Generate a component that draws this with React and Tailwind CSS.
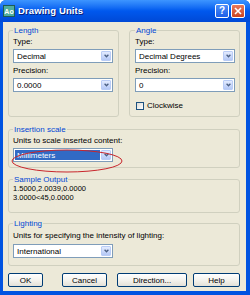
import React from 'react';

const Chevron = () => (
  <svg width="5" height="4" viewBox="0 0 5 4">
    <path d="M0.6 0.7 L2.5 2.7 L4.4 0.7" fill="none" stroke="#4D6185" strokeWidth="1.3" />
  </svg>
);

const Select = ({ value, highlighted }) => (
  <div className="w-[100px] h-[14px] bg-white border border-[#7F9DB9] flex items-stretch p-[1px]">
    {highlighted ? (
      <div className="flex-1 flex items-center pl-[2px] text-[8px] leading-[9px] bg-[#316AC5] text-white">{value}</div>
    ) : (
      <div className="flex-1 flex items-center pl-[2px] text-[8px] leading-[9px] text-black">{value}</div>
    )}
    <div className="w-[10px] ml-[1px] rounded-[1px] bg-linear-to-b from-[#E3EBFE] to-[#B4C8F6] border border-[#B9CCF6] flex items-center justify-center">
      <Chevron />
    </div>
  </div>
);

const Label = ({ children, className = '' }) => (
  <div className={`text-[8px] leading-[9px] text-black whitespace-nowrap ${className}`}>{children}</div>
);

const Legend = ({ children }) => (
  <legend className="px-[1px] text-[8px] leading-[9px] text-[#0046D5]">{children}</legend>
);

const Button = ({ children, className = '' }) => (
  <div className={`h-[14px] border border-[#003C74] rounded-[2px] bg-linear-to-b from-white via-[#F4F3EE] to-[#E3E1D8] flex items-center justify-center text-[8px] leading-[9px] text-black ${className}`}>
    {children}
  </div>
);

export default function App() {
  return (
    <div className="w-[250px] h-[295px] bg-[#0053E1] rounded-t-[6px] overflow-hidden flex flex-col font-['Liberation_Sans',Arial,sans-serif]">
      {/* Title bar */}
      <div className="h-[22px] shrink-0 flex items-center pl-[3px] pr-[5px] bg-linear-to-b from-[#3D95FF] via-[#0058EE] to-[#0049D6]">
        <div className="w-[12px] h-[12px] bg-[#4FAE9E] border border-[#1E5B55] flex items-end justify-center text-[7px] leading-[8px] font-bold text-white">
          Ao
        </div>
        <div className="ml-[3px] text-[9.5px] leading-[12px] font-bold text-white tracking-[0.1px] [text-shadow:1px_1px_0_#0A1E7A]">
          Drawing Units
        </div>
        <div className="flex-1" />
        <div className="w-[14px] h-[14px] rounded-[2px] border border-white bg-linear-to-b from-[#4D8EF8] to-[#1E5EE8] flex items-center justify-center text-white text-[10px] leading-[10px] font-bold">
          ?
        </div>
        <div className="ml-[2px] w-[14px] h-[14px] rounded-[2px] border border-white bg-linear-to-b from-[#E9795B] to-[#C9421F] flex items-center justify-center">
          <svg width="8" height="8" viewBox="0 0 8 8">
            <path d="M1 1 L7 7 M7 1 L1 7" stroke="white" strokeWidth="1.6" />
          </svg>
        </div>
      </div>

      {/* Body */}
      <div className="flex-1 ml-[3px] mr-[4px] mb-[4px] bg-[#ECE9D8] pl-[5px] pr-[6px] pt-[4px] flex flex-col">
        <div className="grid grid-cols-2 gap-[10px]">
          <fieldset className="border border-[#D0D0BF] rounded-[3px] pl-[4px] pr-[5px] pb-[6px]">
            <Legend>Length</Legend>
            <Label className="mt-[2px]">Type:</Label>
            <div className="mt-[3px]"><Select value="Decimal" /></div>
            <Label className="mt-[3px]">Precision:</Label>
            <div className="mt-[3px]"><Select value="0.0000" /></div>
          </fieldset>
          <fieldset className="border border-[#D0D0BF] rounded-[3px] pl-[5px] pr-[4px] pb-[6px]">
            <Legend>Angle</Legend>
            <Label className="mt-[2px]">Type:</Label>
            <div className="mt-[3px]"><Select value="Decimal Degrees" /></div>
            <Label className="mt-[3px]">Precision:</Label>
            <div className="mt-[3px]"><Select value="0" /></div>
            <div className="mt-[9px] flex items-center">
              <div className="w-[8px] h-[8px] ml-[1px] border border-[#1C5180] bg-linear-to-br from-[#DCDCD7] to-white" />
              <Label className="ml-[3px]">Clockwise</Label>
            </div>
          </fieldset>
        </div>

        <fieldset className="relative mt-[8px] border border-[#D0D0BF] rounded-[3px] pl-[4px] pr-[5px] pb-[5px]">
          <Legend>Insertion scale</Legend>
          <Label className="mt-[2px]">Units to scale inserted content:</Label>
          <div className="mt-[3px]"><Select value="Millimeters" highlighted /></div>
          <svg className="absolute left-[2px] top-[15px]" width="112" height="24" viewBox="0 0 112 24">
            <ellipse cx="56" cy="12" rx="55" ry="11" fill="none" stroke="#C8262C" strokeWidth="1" />
          </svg>
        </fieldset>

        <fieldset className="mt-[7px] border border-[#D0D0BF] rounded-[3px] pl-[4px] pr-[5px] pb-[10px]">
          <Legend>Sample Output</Legend>
          <div className="text-[7.5px] leading-[9px] text-black">1.5000,2.0039,0.0000</div>
          <div className="text-[7.5px] leading-[9px] text-black">3.0000&lt;45,0.0000</div>
        </fieldset>

        <fieldset className="mt-[6px] border border-[#D0D0BF] rounded-[3px] pl-[4px] pr-[5px] pb-[7px]">
          <Legend>Lighting</Legend>
          <Label className="mt-[3px]">Units for specifying the intensity of lighting:</Label>
          <div className="mt-[4px]"><Select value="International" /></div>
        </fieldset>

        <div className="mt-[7px] flex">
          <Button className="w-[35px]">OK</Button>
          <Button className="w-[45px] ml-[19px]">Cancel</Button>
          <Button className="w-[70px] ml-[10px]">Direction...</Button>
          <Button className="w-[47px] ml-[6px]">Help</Button>
        </div>
      </div>
    </div>
  );
}
